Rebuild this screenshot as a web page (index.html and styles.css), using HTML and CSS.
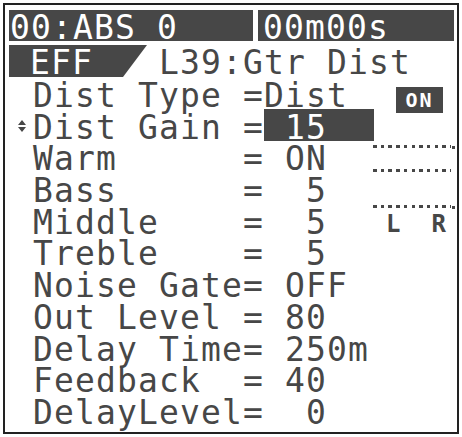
FILE: index.html
```html
<!DOCTYPE html>
<html lang="en">
<head>
    <meta charset="UTF-8">
    <meta name="viewport" content="width=device-width, initial-scale=1.0">
    <title>EFF - Gtr Dist</title>
    <link rel="stylesheet" href="styles.css">
</head>
<body>
    <div class="lcd">
        <div class="status">
            <div class="pos">00:ABS 0</div>
            <div class="time">00m00s</div>
        </div>
        <div class="title">
            <div class="tab">EFF</div>
            <div class="algo">L39:Gtr Dist</div>
        </div>
        <div class="body">
            <div class="params">
                <div class="row">Dist Type =Dist</div>
                <div class="row"><svg class="cursor" width="8" height="12" viewBox="0 0 8 12"><path d="M4 0 L8 5 L0 5 Z M0 7 L8 7 L4 12 Z" fill="#474747"/></svg>Dist Gain =<span class="hl"> 15</span></div>
                <div class="row">Warm      = ON</div>
                <div class="row">Bass      =  5</div>
                <div class="row">Middle    =  5</div>
                <div class="row">Treble    =  5</div>
                <div class="row">Noise Gate= OFF</div>
                <div class="row">Out Level = 80</div>
                <div class="row">Delay Time= 250m</div>
                <div class="row">Feedback  = 40</div>
                <div class="row">DelayLevel=  0</div>
            </div>
            <div class="meter">
                <div class="onbadge">ON</div>
                <div class="dots end"></div>
                <div class="dots"></div>
                <div class="dots end"></div>
                <div class="lr"><span>L</span><span>R</span></div>
            </div>
        </div>
    </div>
</body>
</html>
```

FILE: styles.css
```css
* {
    margin: 0;
    box-sizing: border-box;
}
body {
    background: #fff;
    color: #474747;
    font-family: "DejaVu Sans Mono", monospace;
    font-size: 33px;
    letter-spacing: 1.13px;
}
.lcd {
    margin: 3px;
    height: 431px;
    border: 2px solid #222;
    padding: 5px 3px 0 4px;
    overflow: hidden;
}
.status {
    display: flex;
    gap: 5px;
    height: 31px;
    line-height: 35px;
    color: #fff;
}
.status > div {
    background: #474747;
    white-space: pre;
}
.pos {
    width: 244px;
    padding-left: 1px;
}
.time {
    flex: 1;
    padding-left: 5px;
}
.title {
    display: flex;
    margin-top: 4px;
    height: 32px;
    line-height: 35px;
}
.tab {
    width: 138px;
    padding-left: 21px;
    background: #474747;
    color: #fff;
    clip-path: polygon(0 0, 100% 0, 114px 100%, 0 100%);
}
.algo {
    margin-left: 12px;
}
.body {
    display: grid;
    grid-template-columns: 364px 82px;
}
.params {
    padding: 3px 0 0 24px;
}
.row {
    height: 31.7px;
    line-height: 31.7px;
    white-space: pre;
}
.cursor {
    margin-left: -15px;
    margin-right: 7px;
    vertical-align: 7px;
}
.hl {
    display: inline-block;
    width: 110px;
    height: 32px;
    margin-top: -3px;
    padding-top: 3px;
    vertical-align: top;
    background: #474747;
    color: #fff;
}
.meter {
    display: flex;
    flex-direction: column;
}
.onbadge {
    width: 47px;
    height: 26px;
    margin: 10px 0 0 23px;
    background: #474747;
    color: #fff;
    font-size: 20px;
    font-weight: bold;
    line-height: 27px;
    text-align: center;
    letter-spacing: 2px;
}
.dots {
    position: relative;
    width: 78px;
    height: 3px;
    background: repeating-linear-gradient(to right, #474747 0 3.5px, transparent 3.5px 7.7px);
}
.dots.end::after {
    content: "";
    position: absolute;
    left: 79px;
    top: 1px;
    width: 3px;
    height: 3px;
    background: #474747;
}
.onbadge + .dots {
    margin-top: 32px;
}
.dots + .dots {
    margin-top: 21px;
}
.dots + .dots + .dots {
    margin-top: 33px;
}
.lr {
    display: flex;
    gap: 30px;
    margin: 4px 0 0 13px;
    font-size: 24px;
    font-weight: bold;
    line-height: 24px;
}
```
